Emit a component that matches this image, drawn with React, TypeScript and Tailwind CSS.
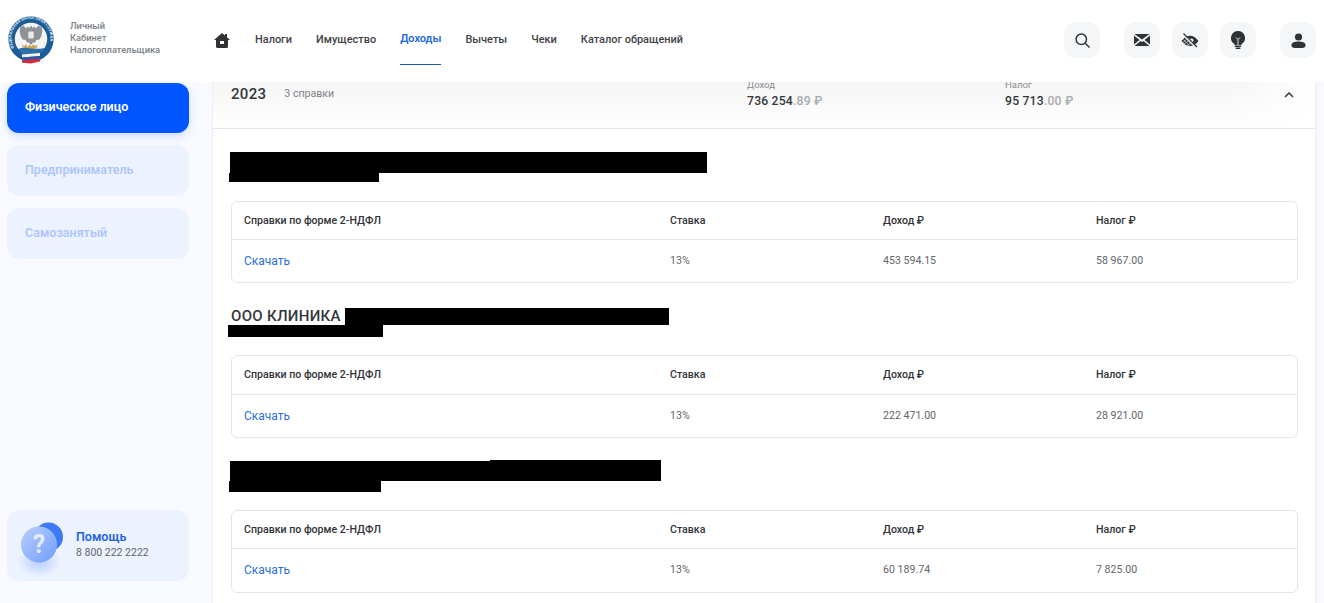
import React from "react";

function Logo() {
  return (
    <svg width="46" height="48" viewBox="0 0 46 48" className="shrink-0">
      <defs>
        <path id="ringText" d="M6.200 32A19.400 19.400 0 1 1 39.800 32" />
      </defs>
      <circle cx="23" cy="23" r="22.700" fill="#1c5c96" />
      <text fontSize="4.100" fontWeight="700" fill="#d5e6f3" fontFamily="Roboto, sans-serif">
        <textPath href="#ringText">ФЕДЕРАЛЬНАЯ НАЛОГОВАЯ СЛУЖБА</textPath>
      </text>
      <circle cx="23" cy="23" r="16.200" fill="#f5f5f5" />
      <path d="M23 9.500l1.600 2.500 2-1.600 1 2 3-2.800 3 1.400.8 4-1 5-2 3.500-3 .5-1.600 3-1.300-1-2.500 3-2.500-3-1.300 1-1.600-3-3-.5-2-3.500-1-5 .8-4 3-1.400 3 2.800 1-2 2 1.600z" fill="#8e9296" />
      <rect x="20.300" y="15.500" width="5.400" height="7" rx="1" fill="#e8ebee" />
      <path d="M13 27c1 2 2 3 3.500 3l1.500-2 1.500 3 2-2.500 2 2 2-2.500 1.500 2 2-1 .5 2-3 2-4 .5-5-1-3-2z" fill="#cda45c" />
      <path d="M9.500 33.500c4-3 9-1.500 13.500-1s9 .5 13.500-.5l-3.500 5c-6.500 2.500-14 2.500-20 0z" fill="#2f6fa8" />
      <path d="M14 38.500l18-1.500v3l-18 1.500z" fill="#f2f2f4" />
      <path d="M14 41.500l18-1.500v2.800l-18 1.500z" fill="#3157a8" />
      <path d="M14 44.300l18-1.500v2.700l-9 2-9-.7z" fill="#cf2d3f" />
    </svg>
  );
}

function IconBtn({ children }: { children: React.ReactNode }) {
  return <div className="flex h-9 w-9 items-center justify-center rounded-xl bg-[#f5f6f8]">{children}</div>;
}

function Row({ income, tax, head = 38, body = 42 }: { income: string; tax: string; head?: number; body?: number }) {
  return (
    <div className="rounded-md border border-[#e3e5e8] bg-white">
      <div
        className={
          (head === 39 ? "h-[39px] " : "h-[38px] ") +
          "grid grid-cols-[426px_213px_213px_1fr] items-center border-b border-[#e3e5e8] px-3 text-[10.600px] font-medium text-[#303338]"
        }
      >
        <span>Справки по форме 2-НДФЛ</span>
        <span>Ставка</span>
        <span>Доход ₽</span>
        <span>Налог ₽</span>
      </div>
      <div
        className={
          (body === 42 ? "h-[42px] " : "h-[43px] pb-[2px] ") +
          "grid grid-cols-[426px_213px_213px_1fr] items-center px-3 text-[10.600px] text-[#63666b]"
        }
      >
        <span className="text-[12px] text-[#2a6fdb]">Скачать</span>
        <span>13%</span>
        <span>{income}</span>
        <span>{tax}</span>
      </div>
    </div>
  );
}

function Money({ a, b }: { a: string; b: string }) {
  return (
    <div className="text-[12.200px] font-medium leading-4 tracking-[0.2px] text-[#33363b]">
      {a}
      <span className="text-[#a9acb0]">{b}</span>
    </div>
  );
}

function SideBtn({ label }: { label: string }) {
  return (
    <div className="flex h-[51px] items-center rounded-xl bg-[#edf2ff] pl-[18px] text-[12.500px] font-semibold text-[#adc6fd]">
      {label}
    </div>
  );
}

export default function App() {
  const nav = ["Налоги", "Имущество", "Доходы", "Вычеты", "Чеки", "Каталог обращений"];
  return (
    <div className="flex h-[603px] w-[1324px] flex-col overflow-hidden bg-[#f8faff] font-['Roboto',sans-serif]">
      <header className="z-10 flex h-[82px] shrink-0 items-center bg-white">
        <div className="flex w-[214px] items-center gap-[16px] self-start pl-2 pt-[16px]">
          <Logo />
          <div className="mb-[4px] text-[9.300px] font-medium leading-[12px] text-[#7c7f84]">
            <div>Личный</div>
            <div>Кабинет</div>
            <div>Налогоплательщика</div>
          </div>
        </div>
        <svg width="16" height="15" viewBox="0 0 16 15" className="mb-[2px] shrink-0">
          <path
            fillRule="evenodd"
            fill="#2f3236"
            d="M8 0l3 2.500V1h2v3.200L16 7h-2v6.500a1.500 1.500 0 0 1-1.500 1.500h-9A1.500 1.500 0 0 1 2 13.500V7H0L8 0zM6 8v3h4V8H6z"
          />
        </svg>
        <nav className="ml-[25px] flex h-full gap-6 text-[10.950px] font-medium text-[#3f4246]">
          {nav.map((n) => (
            <div
              key={n}
              className={
                "flex h-[65px] items-center pt-[15px] " +
                (n === "Доходы" ? "border-b border-[#1f5fa8] font-semibold text-[#2068dc]" : "")
              }
            >
              {n}
            </div>
          ))}
        </nav>
        <div className="mb-[2px] ml-auto mr-[8px] flex items-center">
          <IconBtn>
            <svg width="15" height="15" viewBox="0 0 15 15" fill="none" stroke="#33363b" strokeWidth="1.500">
              <circle cx="6.300" cy="6.300" r="5.200" />
              <path d="m10 10 4.500 4.500" />
            </svg>
          </IconBtn>
          <div className="ml-6 flex gap-3">
            <IconBtn>
              <svg width="16" height="12" viewBox="0 0 16 12" fill="#2f3236">
                <path d="M.500 0h15L8 5.500z" />
                <path d="M0 1.500 5.500 6 0 10.500zM16 1.500 10.500 6l5.500 4.500z" />
                <path d="M.500 12h15L9.500 7 8 8 6.500 7z" />
              </svg>
            </IconBtn>
            <IconBtn>
              <svg width="18" height="15" viewBox="0 0 18 15" fill="#2f3236">
                <path d="M.500 8C3 4.500 6 2.800 9 2.800s6 1.700 8.500 5.200C15 11.500 12 13 9 13S3 11.500.500 8z" />
                <circle cx="10.500" cy="7.500" r="2" fill="#f5f6f8" />
                <path d="M2 1l13.500 13.500" stroke="#f5f6f8" strokeWidth="2" />
                <path d="M2.500.500l13.500 13.500" stroke="#2f3236" strokeWidth="1.200" />
                <path d="M1 9l5 5M2.500 6.500l7 7.500M4.500 5l7 7.500M.500 10.500l7-5.500M2 12l6.500-5M5 13.500 10.500 9" stroke="#f5f6f8" strokeWidth="0.600" />
              </svg>
            </IconBtn>
            <IconBtn>
              <svg width="14" height="18" viewBox="0 0 14 18" fill="#2f3236">
                <path d="M7 0a7 7 0 0 0-4.200 12.600c.6.500.9.900.9 1.400h6.600c0-.5.300-.9.900-1.400A7 7 0 0 0 7 0z" />
                <path d="M5 6.500 7 8.500l2-2M7 8.500V14" stroke="#f5f6f8" strokeWidth="0.900" fill="none" />
                <rect x="3.700" y="14.600" width="6.600" height="1.300" rx="0.600" />
                <rect x="4.500" y="16.400" width="5" height="1.500" rx="0.700" />
              </svg>
            </IconBtn>
          </div>
          <div className="ml-6">
            <IconBtn>
              <svg width="15" height="15" viewBox="0 0 16 16" fill="#2f3236">
                <circle cx="8" cy="4.200" r="3.800" />
                <path d="M.500 13c0-3 3.500-4 7.500-4s7.500 1 7.500 4-3.500 3-7.500 3-7.500 0-7.500-3z" />
              </svg>
            </IconBtn>
          </div>
        </div>
      </header>

      <div className="flex min-h-0 flex-1">
        <aside className="flex w-[212px] shrink-0 flex-col pb-[22px] pl-[7px] pr-[23px] pt-px">
          <div className="flex h-[50px] items-center rounded-xl bg-[#0055ff] pb-[2px] pl-[18px] text-[12.500px] font-semibold text-white shadow-[0_3px_10px_rgba(0,85,255,0.18)]">
            Физическое лицо
          </div>
          <div className="mt-3">
            <SideBtn label="Предприниматель" />
          </div>
          <div className="mt-3">
            <SideBtn label="Самозанятый" />
          </div>
          <div className="mt-auto flex h-[71px] items-center gap-[13px] rounded-xl bg-[#edf2ff] pl-[14px]">
            <svg width="42" height="46" viewBox="0 0 42 46" className="shrink-0 overflow-visible">
              <defs>
                <linearGradient id="q" x1="0" y1="0" x2="1" y2="1">
                  <stop offset="0" stopColor="#b9cffb" />
                  <stop offset="1" stopColor="#6f9dfb" />
                </linearGradient>
                <radialGradient id="g">
                  <stop offset="0" stopColor="#8db2fd" stopOpacity="0.55" />
                  <stop offset="1" stopColor="#8db2fd" stopOpacity="0" />
                </radialGradient>
              </defs>
              <ellipse cx="18" cy="39" rx="22" ry="15" fill="url(#g)" />
              <circle cx="27.500" cy="14" r="14.500" fill="#3f7af5" />
              <circle cx="18" cy="21.500" r="18" fill="url(#q)" />
              <text x="18" y="30" textAnchor="middle" fontSize="25" fontWeight="700" fill="#e4ecff" fontFamily="Roboto, sans-serif">
                ?
              </text>
            </svg>
            <div className="pb-[2px]">
              <div className="text-[12.500px] font-semibold leading-4 text-[#1f62e0]">Помощь</div>
              <div className="text-[10.500px] leading-[15px] text-[#63666b]">8 800 222 2222</div>
            </div>
          </div>
        </aside>

        <main className="min-w-0 flex-1 overflow-hidden">
          <div className="h-full w-[1104px] border-x border-[#eeeff2] bg-white shadow-[0_0_8px_rgba(40,50,80,0.05)]">
            <div className="relative flex h-[47px] items-start border-b border-[#e3e5e8] bg-gradient-to-b from-[#f5f5f6] to-white pl-[18px]">
              <div className="absolute inset-y-0 right-0 w-[90px] bg-gradient-to-r from-transparent to-white" />
              <span className="relative mt-[2px] text-[15px] font-medium leading-5 tracking-[0.3px] text-[#33363b]">2023</span>
              <span className="relative ml-[18px] mt-[4px] text-[10.600px] leading-4 text-[#808387]">3 справки</span>
              <div className="absolute left-[534px] top-[-3px]">
                <div className="h-3 text-[9.500px] leading-3 text-[#8b8e92]">Доход</div>
                <div className="mt-[2px]">
                  <Money a="736 254" b=".89 ₽" />
                </div>
              </div>
              <div className="absolute left-[792px] top-[-3px]">
                <div className="h-3 text-[9.500px] leading-3 text-[#8b8e92]">Налог</div>
                <div className="mt-[2px]">
                  <Money a="95 713" b=".00 ₽" />
                </div>
              </div>
              <svg width="10" height="6" viewBox="0 0 10 6" fill="none" stroke="#33363b" strokeWidth="1.500" className="absolute right-[21px] top-[10px]">
                <path d="m1 5 4-4 4 4" />
              </svg>
            </div>

            <div className="pl-[18px] pr-[17px]">
              <div className="pt-[23px]">
                <div className="-ml-px h-[21px] w-[477px] bg-black" />
                <div className="-ml-[2px] h-[9px] w-[150px] bg-black" />
              </div>
              <div className="mt-[19px]">
                <Row income="453 594.15" tax="58 967.00" />
              </div>
              <div className="mt-[25px] flex h-[17px] items-start">
                <span className="text-[15px] font-medium leading-[17px] tracking-[0.3px] text-[#33363b]">ООО КЛИНИКА</span>
                <div className="ml-[4px] h-[17px] w-[324px] bg-black" />
              </div>
              <div className="-ml-[3px] h-3 w-[155px] bg-black" />
              <div className="mt-[18px]">
                <Row income="222 471.00" tax="28 921.00" head={39} />
              </div>
              <div className="relative -ml-px mt-[23px] h-5 w-[431px] bg-black">
                <div className="absolute right-0 top-[-1px] h-px w-[171px] bg-black" />
              </div>
              <div className="-ml-[2px] h-[11px] w-[152px] bg-black" />
              <div className="mt-[18px]">
                <Row income="60 189.74" tax="7 825.00" body={43} />
              </div>
            </div>
          </div>
        </main>
      </div>
    </div>
  );
}
